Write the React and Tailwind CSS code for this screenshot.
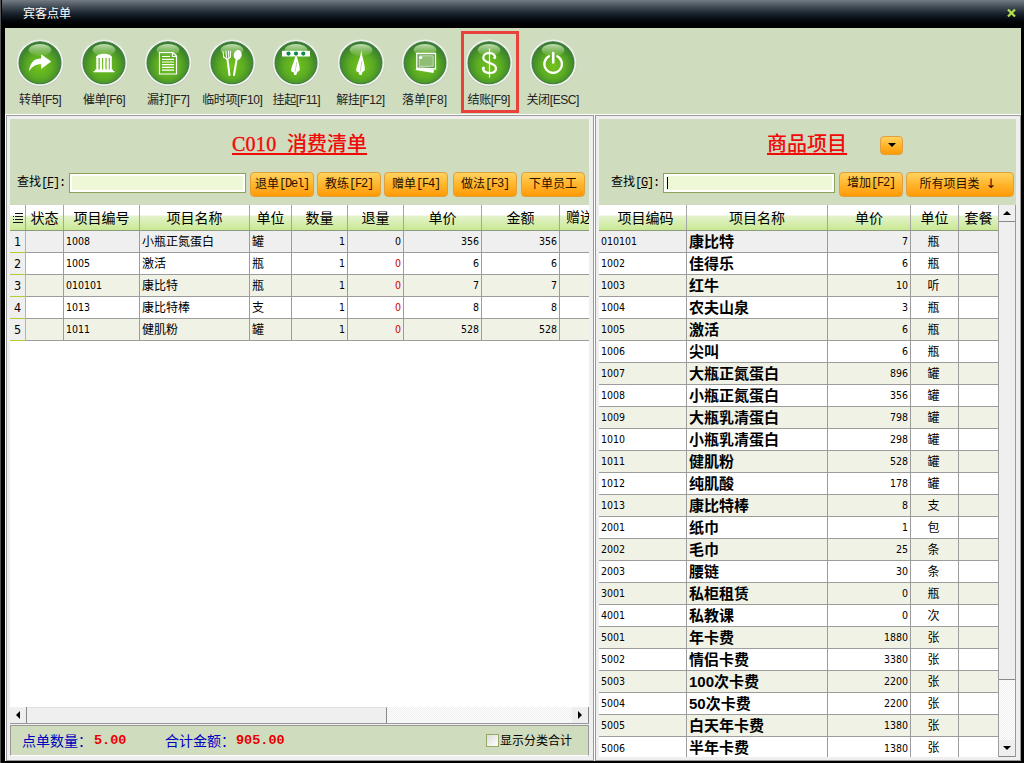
import React from "react";

const orderCols = [
  { key: "state", label: "状态", cls: "w-[38px] justify-start", head: "w-[38px]" },
  { key: "code", label: "项目编号", cls: "w-[76px] justify-start", head: "w-[76px]", num: true },
  { key: "name", label: "项目名称", cls: "w-[110px] justify-start", head: "w-[110px]" },
  { key: "unit", label: "单位", cls: "w-[42px] justify-start", head: "w-[42px]" },
  { key: "qty", label: "数量", cls: "w-[56px] justify-end", head: "w-[56px]", num: true },
  { key: "back", label: "退量", cls: "w-[56px] justify-end", head: "w-[56px]", num: true },
  { key: "price", label: "单价", cls: "w-[78px] justify-end", head: "w-[78px]", num: true },
  { key: "total", label: "金额", cls: "w-[78px] justify-end", head: "w-[78px]", num: true },
];

const orders = [
  { code: "1008", name: "小瓶正氮蛋白", unit: "罐", qty: 1, back: 0, price: 356, total: 356 },
  { code: "1005", name: "激活", unit: "瓶", qty: 1, back: 0, price: 6, total: 6 },
  { code: "010101", name: "康比特", unit: "瓶", qty: 1, back: 0, price: 7, total: 7 },
  { code: "1013", name: "康比特棒", unit: "支", qty: 1, back: 0, price: 8, total: 8 },
  { code: "1011", name: "健肌粉", unit: "罐", qty: 1, back: 0, price: 528, total: 528 },
];

const products = [
  ["010101", "康比特", 7, "瓶"],
  ["1002", "佳得乐", 6, "瓶"],
  ["1003", "红牛", 10, "听"],
  ["1004", "农夫山泉", 3, "瓶"],
  ["1005", "激活", 6, "瓶"],
  ["1006", "尖叫", 6, "瓶"],
  ["1007", "大瓶正氮蛋白", 896, "罐"],
  ["1008", "小瓶正氮蛋白", 356, "罐"],
  ["1009", "大瓶乳清蛋白", 798, "罐"],
  ["1010", "小瓶乳清蛋白", 298, "罐"],
  ["1011", "健肌粉", 528, "罐"],
  ["1012", "纯肌酸", 178, "罐"],
  ["1013", "康比特棒", 8, "支"],
  ["2001", "纸巾", 1, "包"],
  ["2002", "毛巾", 25, "条"],
  ["2003", "腰链", 30, "条"],
  ["3001", "私柜租赁", 0, "瓶"],
  ["4001", "私教课", 0, "次"],
  ["5001", "年卡费", 1880, "张"],
  ["5002", "情侣卡费", 3380, "张"],
  ["5003", "100次卡费", 2200, "张"],
  ["5004", "50次卡费", 2200, "张"],
  ["5005", "白天年卡费", 1380, "张"],
  ["5006", "半年卡费", 1380, "张"],
];

const glyphs = {
  transfer: (
    <path d="M13.200 32.500c.2-8.500 5-13 12-13v-4.300l10 7.200-10 7.500v-4.600c-5.300-.2-9 1.700-12 7.200z" fill="#fff" />
  ),
  urge: (
    <g fill="#fff">
      <path d="M16 18c1.500-4.500 14.500-4.500 16 0v1H16z" />
      <path d="M16.300 19h2.200V31h-2.200zM19.800 19h2.200V31h-2.200zM23.200 19h2.200V31h-2.200zM26.600 19h2.200V31h-2.200zM29.800 19h2V31h-2z" />
      <path d="M15 30.500h18v1.500H15zM13.500 32h21v1.300h-21z" />
    </g>
  ),
  print: (
    <g fill="none" stroke="#fff" strokeWidth="1.200">
      <path d="M15.500 13.500h13.500l3.500 3.500v18h-17z" />
      <path d="M28.500 13.500v4h4" />
      <path d="M18 17.500h8M18 20.300h12M18 23h12M18 25.700h12M18 28.400h12M18 31.100h12" />
    </g>
  ),
  temp: (
    <g fill="none" stroke="#fff" strokeLinecap="round">
      <path d="M15 12.500l.8 6M18 12l.5 6.500M20.500 12l.3 6.500M22.500 12.200l-.2 6" strokeWidth="1" />
      <path d="M15.500 17.500c.8 3 6.300 3 6.900.3l-2.900 3z" fill="#fff" strokeWidth="1" />
      <path d="M19.500 20.500l2 15.500M28.700 20l-2.700 16" strokeWidth="2" />
      <ellipse cx="29.700" cy="16" rx="4" ry="5" fill="#fff" stroke="none" transform="rotate(12 29.700 16)" />
    </g>
  ),
  hang: (
    <g>
      <rect x="10" y="11.800" width="28" height="5.700" fill="#fff" />
      <g fill="#0b8a4a">
        <circle cx="16.500" cy="14.600" r="2.100" />
        <circle cx="24" cy="14.600" r="2.100" />
        <circle cx="31.300" cy="14.600" r="2.100" />
      </g>
      <path d="M23.200 17.500h1.800c.8 5 3.200 9 2.600 14l-2.300 1.500-1 3h-2l-.8-2.700-2.300-1c-.2-5 3-9 4-14.800z" fill="#fff" />
      <path d="M24.800 23l-1.600 9.500" stroke="#9ec98a" strokeWidth=".7" />
    </g>
  ),
  unhang: (
    <g>
      <path d="M24.300 11c.6 7 4 14 3.500 20.500l-2.300 1.500-1 3h-2l-1-2.700-2.300-1c0-6 4.500-13 5.100-21.300z" fill="#fff" />
      <path d="M24.900 22l-1.600 10.500" stroke="#9ec98a" strokeWidth=".7" />
    </g>
  ),
  drop: (
    <g>
      <path d="M15.500 29l17.500 1.500-.5 3.500-18-3z" fill="#fff" />
      <path d="M15.800 14.500h18.700v15.500l-18.700-1z" fill="#5f9b45" stroke="#fff" strokeWidth="1.300" />
      <path d="M18.200 16.800h14v10.500h-14z" fill="#8fbd74" stroke="#dcebd2" strokeWidth=".8" />
      <circle cx="19.800" cy="18.500" r="1.600" fill="#fff" />
    </g>
  ),
  pay: (
    <g fill="none" stroke="#fff">
      <path d="M30.300 18.500c-.5-3-3-4.500-6-4.500-3.500 0-6 1.800-6 4.700 0 6.300 12.700 4.300 12.700 10.500 0 3-2.700 4.800-6.500 4.800-3.500 0-6.200-1.500-6.700-5" strokeWidth="2.200" />
      <path d="M24.500 9.500v29" strokeWidth="1.200" />
      <circle cx="29.600" cy="18.700" r="1" fill="#fff" />
      <circle cx="18.500" cy="29" r="1" fill="#fff" />
    </g>
  ),
  power: (
    <g fill="none" stroke="#fff" strokeWidth="2.300" strokeLinecap="round">
      <path d="M20 17.300a8.800 8.800 0 1 0 8.300 0" />
      <path d="M24.200 14v9.500" strokeWidth="2.600" />
    </g>
  ),
};

const tools = [
  { icon: "transfer", label: "转单[F5]" },
  { icon: "urge", label: "催单[F6]" },
  { icon: "print", label: "漏打[F7]" },
  { icon: "temp", label: "临时项[F10]" },
  { icon: "hang", label: "挂起[F11]" },
  { icon: "unhang", label: "解挂[F12]" },
  { icon: "drop", label: "落单[F8]", wide: true },
  { icon: "pay", label: "结账[F9]", active: true },
  { icon: "power", label: "关闭[ESC]" },
];

function Tool({ icon, label, active, wide }) {
  return (
    <button className="relative w-[64.100px] shrink-0 flex flex-col items-center pt-[11px]">
      <svg width="48" height="48" viewBox="0 0 48 48">
        <defs>
          <radialGradient id={`ball-${icon}`} cx="50%" cy="58%" r="58%">
            <stop offset="0" stopColor="#74c41c" />
            <stop offset=".5" stopColor="#5bac22" />
            <stop offset="1" stopColor="#34772f" />
          </radialGradient>
          <linearGradient id={`shine-${icon}`} x1="0" y1="0" x2="0" y2="1">
            <stop offset="0" stopColor="#e6f5da" stopOpacity=".8" />
            <stop offset="1" stopColor="#a8dc80" stopOpacity=".15" />
          </linearGradient>
        </defs>
        <circle cx="24" cy="24.400" r="23.600" fill="#c3cbbb" />
        <circle cx="24" cy="23.800" r="23.300" fill="#edf1ea" />
        <circle cx="24" cy="23.800" r="21" fill={`url(#ball-${icon})`} stroke="#3c7a42" strokeWidth="1" />
        <rect x="12.500" y="5" width="23" height="12" rx="11.500" ry="6" fill={`url(#shine-${icon})`} />
        {glyphs[icon]}
      </svg>
      <span className={`mt-[5px] text-[12px] leading-4 whitespace-nowrap text-[#222] ${wide ? "tracking-[0.1px]" : "tracking-[-0.400px]"}`}>{label}</span>
      {active && <span className="absolute left-[4px] top-[3px] w-[58px] h-[82px] border-3 border-[#ea403b]" />}
    </button>
  );
}

function Mono({ children }) {
  return <span className="font-['Liberation_Mono',monospace] tracking-[-1.2px]">{children}</span>;
}

function OrangeButton({ className, children }) {
  return (
    <button className={`shrink-0 flex items-center justify-center whitespace-nowrap rounded-[4px] border border-[#e0a040] bg-linear-to-b from-[#ffd35c] via-[#ffb52a] to-[#ff9a00] text-[12px] leading-4 text-[#2a1000] ${className}`}>
      {children}
    </button>
  );
}

function Search({ hotkey, width, caret }) {
  return (
    <>
      <span className="w-[52px] shrink-0 text-[12px] leading-4 whitespace-nowrap pb-[3px]">
        查找<Mono>[<u>{hotkey}</u>]:</Mono>
      </span>
      <div className={`${width} h-[20px] mb-[2px] shrink-0 border border-[#8aa55a] bg-[#eef8d6] shadow-[inset_0_0_0_2px_#fff] flex items-center pl-[3px]`}>
        {caret && <span className="w-px h-[12px] bg-black" />}
      </div>
    </>
  );
}

function Head({ className, children }) {
  return (
    <div className={`shrink-0 h-full flex items-center justify-center border-r border-[#a5a5a5] text-[14px] leading-none whitespace-nowrap overflow-hidden ${className}`}>
      {children}
    </div>
  );
}

const text = "text-[12px]";
const num = "font-['DejaVu_Sans_Condensed','DejaVu_Sans',sans-serif] font-stretch-condensed text-[10.500px]";

function Cell({ className, children }) {
  return (
    <div className={`shrink-0 h-full flex items-center border-r border-[#9c9c9c] px-[2px] leading-none whitespace-nowrap ${className}`}>
      {children}
    </div>
  );
}

const headBar = "flex h-[26px] border-b border-[#8e9a80] bg-[linear-gradient(#fff_0,#fff_10px,#e4f3cd_11px,#c9e993_100%)]";
const track = "bg-[repeating-conic-gradient(#fff_0_25%,#eeeeee_0_50%)] bg-[length:2px_2px]";

function rowColor(i) {
  if (i === 0) return "bg-[#efefef]";
  return i % 2 === 0 ? "bg-[#f1f2e6]" : "bg-white";
}

function OrderPanel() {
  return (
    <section className="w-[588px] shrink-0 border border-[#999] bg-[#efefef] pt-[3px] pb-[3px] pl-[3px] pr-[4px] flex flex-col">
      <div className="h-[86px] shrink-0 bg-[#cfdcbd]">
        <h1 className="h-[52px] flex items-center justify-center text-[20px] leading-none text-[#f00a0a]">
          <span className="border-b-2 border-[#f00a0a] font-medium whitespace-nowrap h-[20px] leading-[18px]">
            <span className="font-['Liberation_Serif',serif] tracking-[0.3px] [-webkit-text-stroke:0.4px_#f00a0a]">C010&nbsp; </span>消费清单
          </span>
        </h1>
        <div className="flex items-center h-[26px] pl-[7px]">
          <Search hotkey="F" width="w-[177px]" />
          <OrangeButton className="w-[64px] h-[25px] ml-1">退单<Mono>[Del]</Mono></OrangeButton>
          <OrangeButton className="w-[64px] h-[25px] ml-[3px]">教练<Mono>[F2]</Mono></OrangeButton>
          <OrangeButton className="w-[64px] h-[25px] ml-[3px]">赠单<Mono>[F4]</Mono></OrangeButton>
          <OrangeButton className="w-[64px] h-[25px] ml-[5px]">做法<Mono>[F3]</Mono></OrangeButton>
          <OrangeButton className="w-[64px] h-[25px] ml-1">下单员工</OrangeButton>
        </div>
      </div>
      <div className={headBar}>
        <Head className="w-[16px]">
          <svg width="10" height="12" viewBox="0 0 10 12" shapeRendering="crispEdges">
            <path d="M2 1h8v1H2zM0 4h1v1H0zM2 4h8v1H2zM0 7h1v1H0zM2 7h8v1H2zM0 10h10v1H0z" fill="#111" />
          </svg>
        </Head>
        {orderCols.map((c) => (
          <Head key={c.key} className={c.head}>{c.label}</Head>
        ))}
        <div className="w-[29px] pl-[6px] overflow-hidden whitespace-nowrap text-[14px] leading-[25px]">赠送</div>
      </div>
      <div className="flex-1 bg-white">
        {orders.map((o, i) => (
          <div key={o.code} className={`flex h-[22px] border-b border-[#9c9c9c] ${rowColor(i)}`}>
            <div className="w-[16px] h-[22px] shrink-0 border-r border-b border-[#b5c93c] bg-[#efefef] font-['DejaVu_Sans_Condensed','DejaVu_Sans',sans-serif] font-stretch-condensed text-[12.500px] leading-[22px] text-center">
              {i + 1}
            </div>
            {orderCols.map((c) => (
              <Cell
                key={c.key}
                className={`${c.cls} ${c.num ? num : text} ${c.key === "back" && i > 0 ? "text-[#d00000]" : ""}`}
              >
                {o[c.key]}
              </Cell>
            ))}
          </div>
        ))}
      </div>
      <div className="h-[17px] shrink-0 flex border-b border-[#999]">
        <div className="w-[17px] border-r border-[#888] flex items-center justify-center">
          <span className="border-y-4 border-y-transparent border-r-4 border-r-black" />
        </div>
        <div className="w-[360px] border-r border-[#888] border-t border-t-[#e0e0e0]" />
        <div className={`flex-1 ${track}`} />
        <div className="w-[17px] border-r border-[#888] flex items-center justify-center">
          <span className="border-y-4 border-y-transparent border-l-4 border-l-black" />
        </div>
      </div>
      <div className="h-[33px] shrink-0 pt-px">
        <div className="h-[31px] flex items-center border border-[#999] border-b-white bg-[#cfdcbd] pl-[11px] text-[14px] leading-none text-[#0000c0]">
          <span className="w-[72px] whitespace-nowrap">点单数量：</span>
          <b className="w-[71px] font-['Liberation_Mono',monospace] text-[13.500px] text-[#e80000]">5.00</b>
          <span className="w-[71px] whitespace-nowrap">合计金额：</span>
          <b className="font-['Liberation_Mono',monospace] text-[13.500px] text-[#e80000]">905.00</b>
          <label className="ml-auto mr-[16px] flex items-center text-[12px] text-black">
            <span className="w-[13px] h-[13px] mr-[1px] border border-[#95aa60] bg-linear-to-br from-[#ddd] to-white" />
            显示分类合计
          </label>
        </div>
      </div>
    </section>
  );
}

function ProductPanel() {
  return (
    <section className="w-[426px] shrink-0 border border-[#999] bg-[#efefef] pt-[3px] pb-[3px] pl-[3px] pr-[4px] flex flex-col">
      <div className="h-[86px] shrink-0 bg-[#cfdcbd]">
        <div className="flex items-center h-[52px] pl-[168px]">
          <h1 className="w-[80px] h-[20px] border-b-2 border-[#f00a0a] text-[20px] leading-[18px] font-medium whitespace-nowrap text-[#f00a0a]">商品项目</h1>
          <OrangeButton className="w-[23px] h-[19px] ml-[33px]">
            <span className="border-x-4 border-x-transparent border-t-4 border-t-black" />
          </OrangeButton>
        </div>
        <div className="flex items-center h-[26px] pl-[12px]">
          <Search hotkey="G" width="w-[172px]" caret />
          <OrangeButton className="w-[64px] h-[25px] ml-1 pb-[3px]">增加<Mono>[F2]</Mono></OrangeButton>
          <OrangeButton className="w-[108px] h-[25px] ml-[3px] pr-[4px]">
            所有项目类
            <span className="w-[17px] text-right font-['DejaVu_Sans',sans-serif] text-[13px]">↓</span>
          </OrangeButton>
        </div>
      </div>
      <div className="flex flex-1 min-h-0">
        <div className="w-[400px] shrink-0 flex flex-col">
          <div className={`${headBar} shrink-0`}>
            <Head className="w-[88px] pl-[6px]">项目编码</Head>
            <Head className="w-[141px]">项目名称</Head>
            <Head className="w-[83px]">单价</Head>
            <Head className="w-[48px]">单位</Head>
            <Head className="w-[40px]">套餐</Head>
          </div>
          <div className="flex-1 min-h-0 overflow-hidden">
            {products.map(([code, name, price, unit], i) => (
              <div key={code} className={`flex h-[22px] border-b border-[#9c9c9c] last:border-b-0 ${rowColor(i)}`}>
                <Cell className={`w-[88px] ${num}`}>{code}</Cell>
                <Cell className="w-[141px] text-[15px] font-bold pb-px">{name}</Cell>
                <Cell className={`w-[83px] justify-end ${num}`}>{price}</Cell>
                <Cell className={`w-[48px] justify-center pr-[4px] ${text}`}>{unit}</Cell>
                <Cell className="w-[40px]" />
              </div>
            ))}
          </div>
        </div>
        <div className="w-[17px] shrink-0 flex flex-col border-r border-[#999]">
          <div className="h-[17px] border-b border-[#888] flex items-center justify-center">
            <span className="border-x-4 border-x-transparent border-b-4 border-b-black" />
          </div>
          <div className="h-[458px] border-b border-[#888]" />
          <div className={`flex-1 ${track}`} />
          <div className="h-[17px] border-b border-[#888] flex items-center justify-center">
            <span className="border-x-4 border-x-transparent border-t-4 border-t-black" />
          </div>
        </div>
      </div>
    </section>
  );
}

export default function App() {
  return (
    <div className="w-[1024px] h-[763px] overflow-hidden bg-black border-l border-[#555] font-['Liberation_Sans','Noto_Sans_CJK_SC',sans-serif] text-black">
      <header className="h-[28px] ml-px flex items-center justify-between bg-linear-to-b from-[#737b83] via-[#17212c] to-black pl-[21px] pr-[8px]">
        <span className="text-[12px] leading-none text-white">宾客点单</span>
        <svg width="9" height="8" viewBox="0 0 9 8" className="mb-[3px]">
          <path d="M1 .5l7 7M8 .5l-7 7" stroke="#b5e04c" strokeWidth="2.200" />
        </svg>
      </header>
      <main className="ml-[4px] w-[1016px]">
        <nav className="flex h-[86px] bg-[#cfdcbd] pl-[3px]">
          {tools.map((t) => (
            <Tool key={t.icon} {...t} />
          ))}
        </nav>
        <div className="flex gap-px h-[647px] border-t border-white bg-white pl-px">
          <OrderPanel />
          <ProductPanel />
        </div>
      </main>
    </div>
  );
}
